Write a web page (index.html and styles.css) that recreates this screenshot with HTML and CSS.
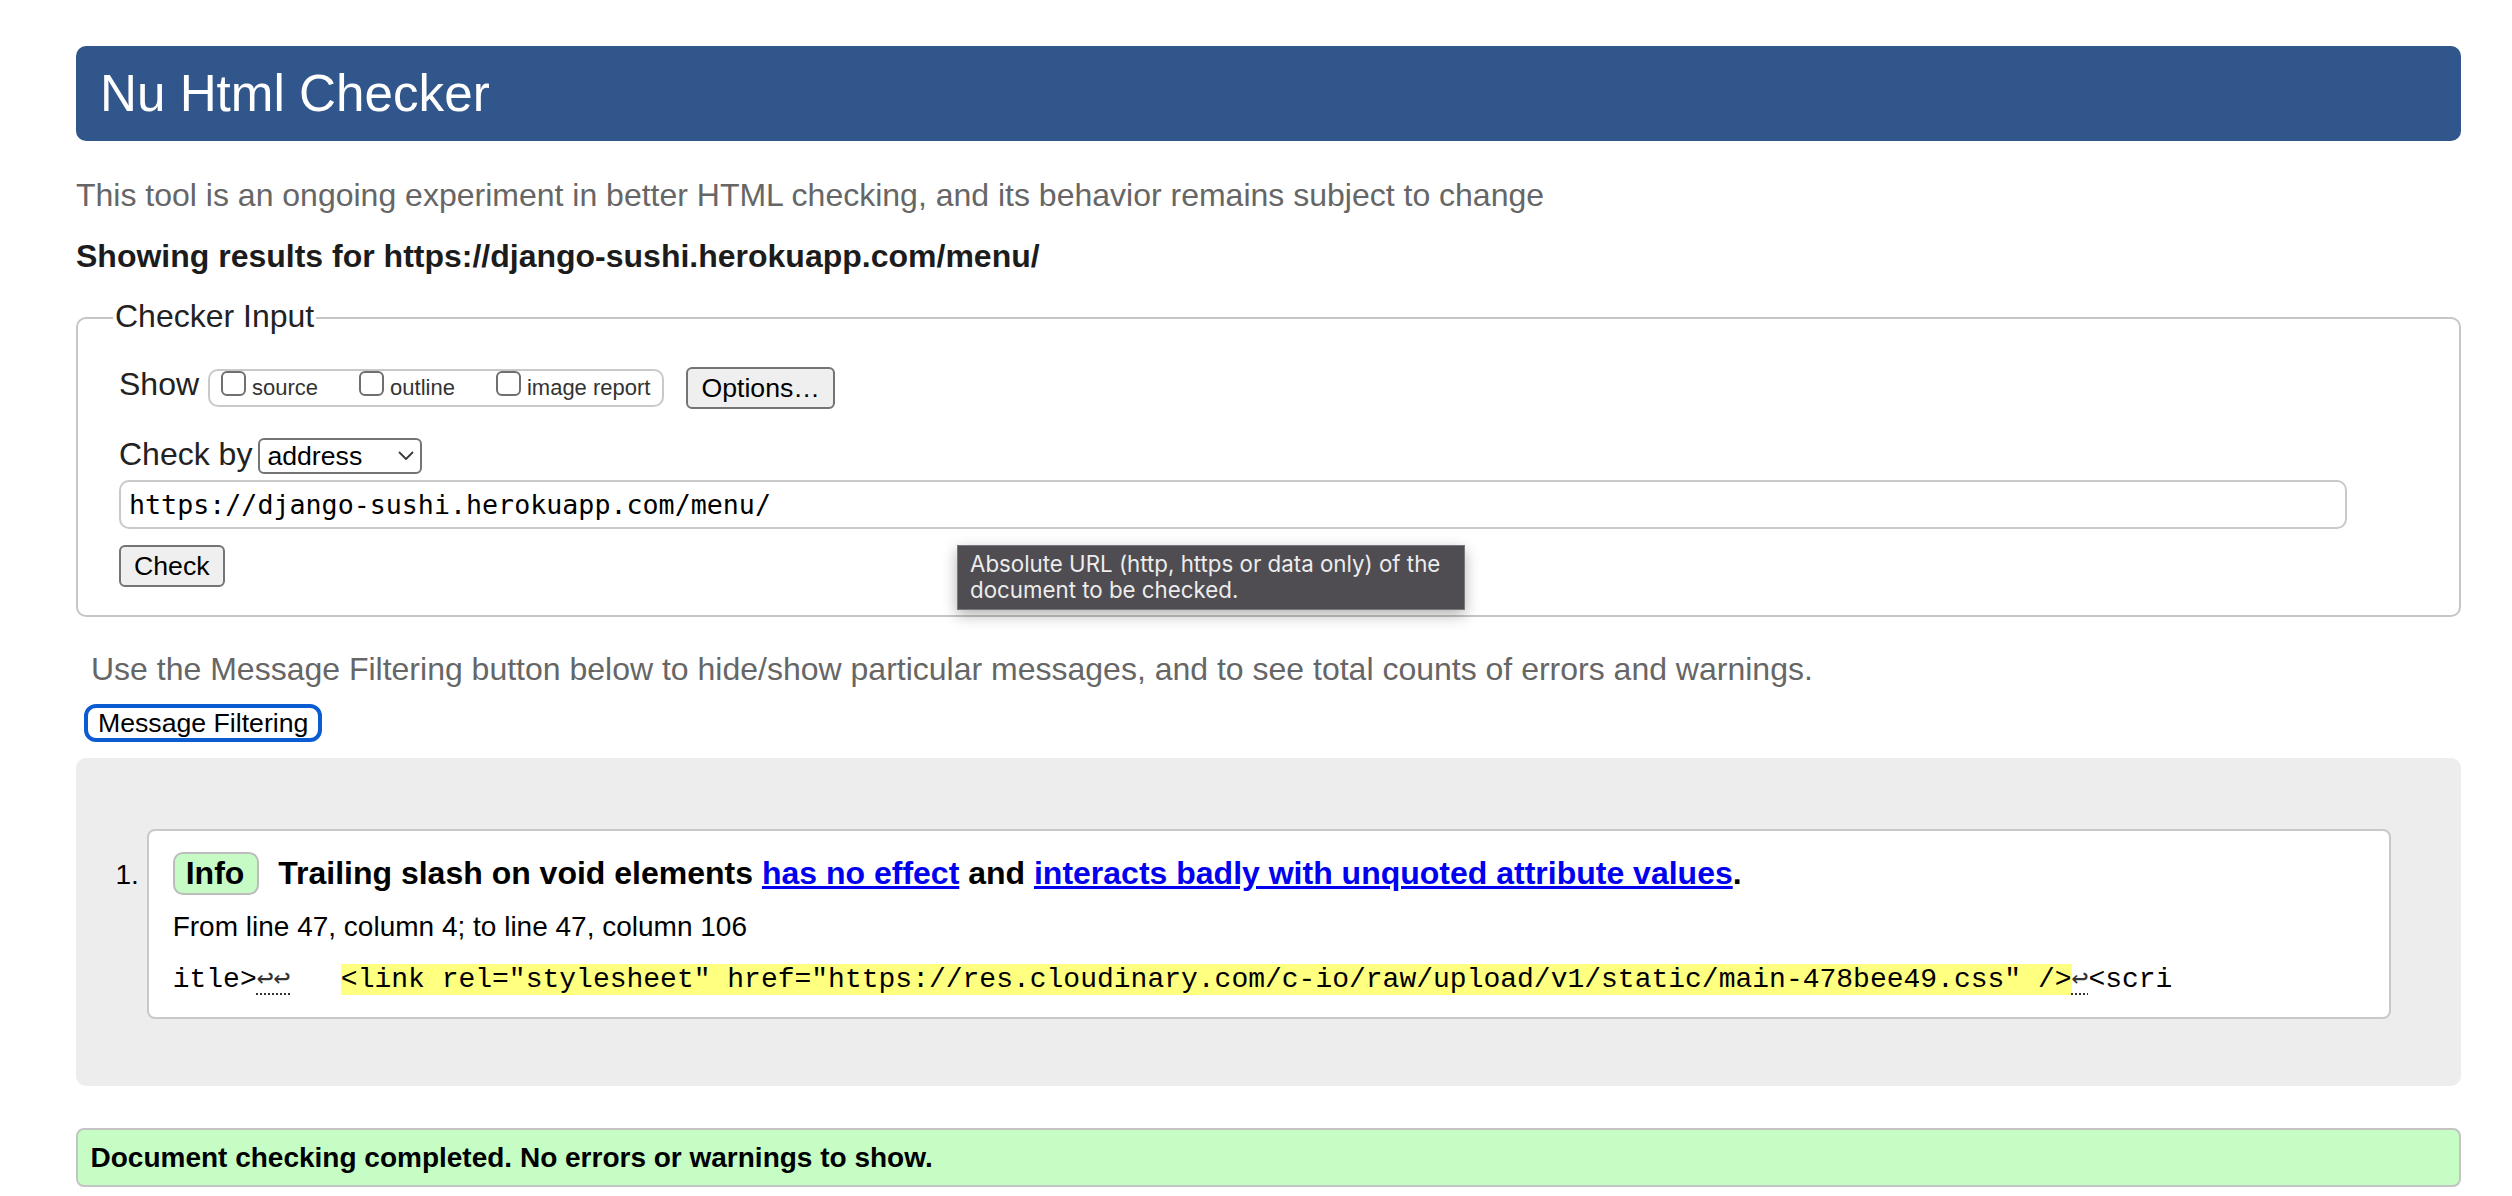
FILE: index.html
```html
<!DOCTYPE html>
<html lang="en">
<head>
<meta charset="utf-8">
<title>Showing results for https://django-sushi.herokuapp.com/menu/ - Nu Html Checker</title>
<link rel="stylesheet" href="styles.css">
</head>
<body>
<h1 class="masthead">Nu Html Checker</h1>
<p class="intro">This tool is an ongoing experiment in better HTML checking, and its behavior remains subject to change</p>
<p class="results-for">Showing results for https://django-sushi.herokuapp.com/menu/</p>
<form class="checker" action="#">
  <fieldset class="checker-input">
    <legend class="legend">Checker Input</legend>
    <div class="row row-show">
      <span class="row-label">Show</span>
      <span class="show-box">
        <label class="opt"><input type="checkbox" class="cb"><span>source</span></label>
        <label class="opt"><input type="checkbox" class="cb"><span>outline</span></label>
        <label class="opt"><input type="checkbox" class="cb"><span>image report</span></label>
      </span>
      <button type="button" class="btn btn-options">Options…</button>
    </div>
    <div class="row row-by">
      <span class="row-label">Check by</span>
      <span class="select"><span>address</span><svg class="chev" width="16" height="10" viewBox="0 0 16 10"><path d="M1.5 1.5 L8 8 L14.5 1.5" fill="none" stroke="#3a3a3a" stroke-width="1.8" stroke-linecap="round" stroke-linejoin="round"/></svg></span>
    </div>
    <div class="url-wrap">
      <div class="url-field">https://django-sushi.herokuapp.com/menu/</div>
      <div class="tooltip">Absolute URL (http, https or data only) of the<br>document to be checked.</div>
    </div>
    <div class="check-row"><button type="button" class="btn">Check</button></div>
  </fieldset>
</form>
<p class="hint">Use the Message Filtering button below to hide/show particular messages, and to see total counts of errors and warnings.</p>
<div class="filter-wrap"><button type="button" class="filter-btn">Message Filtering</button></div>
<div class="results">
  <ol class="messages">
    <li class="message">
      <p class="msg-head"><span class="badge">Info</span> Trailing slash on void elements <a href="#">has no effect</a> and <a href="#">interacts badly with unquoted attribute values</a>.</p>
      <p class="location">From line 47, column 4; to line 47, column 106</p>
      <p class="extract">itle&gt;<span class="lf">↩↩</span>   <mark>&lt;link rel="stylesheet" href="https://res.cloudinary.com/c-io/raw/upload/v1/static/main-478bee49.css" /&gt;</mark><span class="lf">↩</span>&lt;scri</p>
    </li>
  </ol>
</div>
<p class="status">Document checking completed. No errors or warnings to show.</p>
</body>
</html>
```
FILE: styles.css
```css
html {
  background: #fff;
}
body {
  margin: 0;
  padding: 46px 51px 0 76px;
  font-family: "Liberation Sans", Arial, Helvetica, sans-serif;
  color: #222;
  background: #fff;
}
.masthead {
  margin: 0;
  height: 95px;
  padding-left: 24px;
  background: #31568b;
  color: #fff;
  font-size: 51.2px;
  font-weight: normal;
  line-height: 95px;
  border-radius: 10px;
}
.intro {
  margin: 34px 0 0;
  font-size: 32px;
  line-height: 40px;
  color: #666;
}
.results-for {
  margin: 21px 0 0;
  font-size: 32px;
  line-height: 40px;
  font-weight: bold;
  color: #1c1c1c;
}
.checker {
  margin: 0;
}
.checker-input {
  margin: 22px 0 0;
  padding: 29px 41px 28px;
  border: 2px solid #c6c6c6;
  border-radius: 10px;
  min-width: 0;
}
.legend {
  margin-left: -6px;
  padding: 0 2px 4px;
  font-size: 32px;
  line-height: 36px;
  color: #222;
}
.row {
  display: flex;
  align-items: flex-start;
}
.row-label {
  font-size: 32px;
  line-height: 34px;
  color: #222;
}
.row-show .row-label {
  margin-right: 9px;
}
.show-box {
  display: flex;
  align-items: flex-start;
  box-sizing: border-box;
  height: 38px;
  margin-top: 2px;
  padding: 0 12px 0 11px;
  border: 2px solid #c9c9c9;
  border-radius: 10px;
}
.opt {
  display: flex;
  align-items: flex-start;
  font-size: 22px;
  line-height: 34px;
  color: #333;
}
.opt + .opt {
  margin-left: 41px;
}
.cb {
  appearance: none;
  -webkit-appearance: none;
  box-sizing: border-box;
  width: 25px;
  height: 25px;
  margin: 0 6px 0 0;
  border: 2px solid #6f6f6f;
  border-radius: 6px;
  background: #fff;
}
.btn {
  margin: 0;
  padding: 3px 13px;
  border: 2px solid #747474;
  border-radius: 6px;
  background: #efefef;
  color: #000;
  font-family: "Liberation Sans", Arial, Helvetica, sans-serif;
  font-size: 26.67px;
  line-height: 32px;
}
.btn-options {
  margin-left: 22px;
}
.row-by {
  margin-top: 28px;
}
.select {
  display: flex;
  align-items: center;
  justify-content: space-between;
  box-sizing: border-box;
  width: 164px;
  height: 36px;
  margin: 1px 0 0 6px;
  padding: 0 6px 0 7px;
  border: 2px solid #747474;
  border-radius: 6px;
  background: #fff;
  color: #000;
  font-size: 26.67px;
  line-height: 32px;
}
.chev {
  display: block;
}
.url-wrap {
  position: relative;
  width: 2228px;
  margin-top: 6px;
}
.url-field {
  box-sizing: border-box;
  height: 49px;
  padding: 0 8px;
  border: 2px solid #c9c9c9;
  border-radius: 10px;
  font-family: "DejaVu Sans Mono", "Liberation Mono", monospace;
  font-size: 26.67px;
  line-height: 45px;
  color: #000;
}
.tooltip {
  position: absolute;
  left: 838px;
  top: 65px;
  z-index: 2;
  box-sizing: border-box;
  width: 508px;
  padding: 5px 12px;
  border: 1px solid #78777b;
  background: #4f4d52;
  color: #ececec;
  font-family: Inter, "Liberation Sans", sans-serif;
  font-size: 22.3px;
  line-height: 26.3px;
  white-space: nowrap;
  box-shadow: 0 5px 14px rgba(0, 0, 0, 0.3);
}
.check-row {
  display: flex;
  margin-top: 16px;
}
.hint {
  margin: 31.5px 0 0 15px;
  font-size: 32px;
  line-height: 40px;
  color: #666;
}
.filter-wrap {
  display: flex;
  margin: 15px 0 0 8px;
}
.filter-btn {
  box-sizing: border-box;
  height: 38px;
  margin: 0;
  padding: 0 10px;
  border: 4px solid #0b5bd3;
  border-radius: 12px;
  background: #fff;
  color: #000;
  font-family: "Liberation Sans", Arial, Helvetica, sans-serif;
  font-size: 26.67px;
  line-height: 30px;
}
.results {
  margin-top: 16.7px;
  padding: 71px 70px 67.4px 70.7px;
  background: #ededed;
  border-radius: 10px;
}
.messages {
  margin: 0;
  padding: 0;
  list-style: decimal outside;
  font-size: 28px;
  color: #000;
}
.message {
  padding: 20.6px 24px 20px;
  background: #fff;
  border: 2px solid #c9c9c9;
  border-radius: 8px;
}
.msg-head {
  margin: 0;
  font-size: 32px;
  line-height: 43px;
  font-weight: bold;
  color: #000;
}
.badge {
  display: inline-block;
  margin-right: 10px;
  padding: 0 13px 0 11px;
  border: 2px solid #bcbcbc;
  border-radius: 10px;
  background: #c6fbc6;
  line-height: 39px;
}
.msg-head a {
  color: #0000ee;
}
.location {
  margin: 15px 0 0;
  font-size: 28px;
  line-height: 34px;
  color: #000;
}
.extract {
  margin: 19px 0 0;
  font-family: "Liberation Mono", "DejaVu Sans Mono", monospace;
  font-size: 28px;
  line-height: 34px;
  white-space: pre;
  color: #000;
}
.extract mark {
  background: #ffff80;
  color: #000;
}
.lf {
  color: #333;
  text-decoration: underline dotted 2px;
  text-underline-offset: 7px;
}
.status {
  box-sizing: border-box;
  height: 59px;
  margin: 42.3px 0 0;
  padding: 0 12.5px;
  border: 2px solid #c4c4c4;
  border-radius: 8px;
  background: #c5fdc5;
  color: #000;
  font-size: 28px;
  line-height: 55px;
  font-weight: bold;
}
```
